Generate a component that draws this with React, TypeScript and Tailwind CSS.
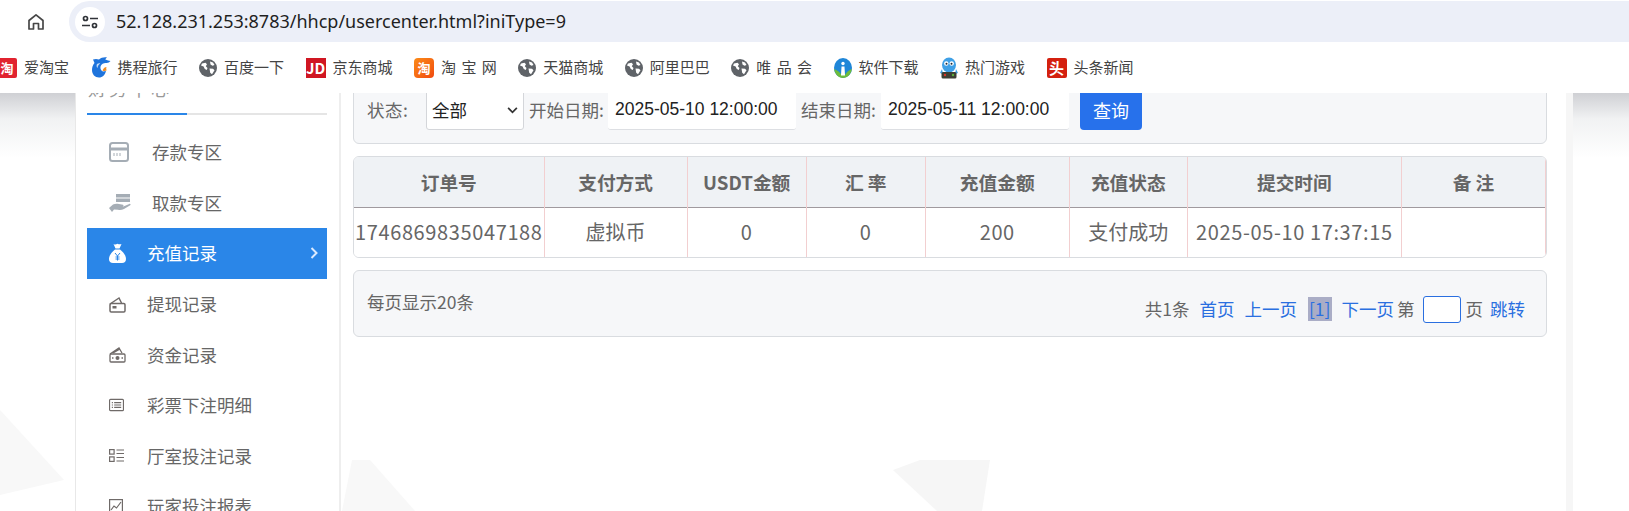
const CJK = "font-['Noto_Sans_CJK_SC','Liberation_Sans',sans-serif]";

const Globe = () => (
  <svg viewBox="0 0 18 18" className="w-[18px] h-[18px]">
    <circle cx="9" cy="9" r="9" fill="#5f6368" />
    <path d="M3 4.500l3.500-.8 1.500 1.600-1.200 2 1.700 1.600-.7 2.200-2-1.200-1.200-2.500L2 6.500zM11 2.500l3 1 1.500 2.500-2 .8-2-1.300zM10.500 9.500l3.500.3 1.500 1.500-2.500 4-1.800-1.500z" fill="#fff" />
  </svg>
);

const TextIcon = ({ bg, text, size = "text-[13px]" }: { bg: string; text: string; size?: string }) => (
  <div className={`w-[20px] h-[20px] rounded-[2px] flex items-center justify-center text-white font-bold leading-none ${bg} ${size}`}>{text}</div>
);

const Dolphin = () => (
  <svg viewBox="0 0 20 22" className="w-[20px] h-[22px]">
    <path d="M2 2.500c2-.8 4-.8 6 0C10 .8 13 0 16 .5c-1 .7-1.500 1.300-1.700 2 2 .7 3.700 1.500 5.200 1.500-1 1.300-2.300 1.900-3.800 2-2.500-.4-5 .5-6 3-.8 2.500.5 5 2.500 5.500l2.800-.5c-.8 3.800-3.500 6.500-7 6.500-4 0-7-3-7-7.500 0-2.700.8-5 2.500-7z" fill="#1f74dc" />
    <path d="M11.500 13.500c1-2.500 2.500-3.500 4-3.500-.5 1.500-.3 2.500.3 3.300-1.200.8-2.800 1-4.300.2z" fill="#f08c22" />
    <path d="M6 7c1.500-1 2.500-.8 3.300-.5-1.500.8-2.500 2.500-2.800 4.500C5.500 10 5.300 8.500 6 7z" fill="#fff" opacity="0.75" />
  </svg>
);

const SoftIcon = () => (
  <svg viewBox="0 0 18 20" className="w-[18px] h-[20px]">
    <ellipse cx="9" cy="10" rx="9" ry="10" fill="#1f86d8" />
    <path d="M0 11c1 5 4.500 9 9 9s8-4 9-9c-3 1-5.500 3-7 6l-1-6H8l-.5 6C6 14 3 12 0 11z" fill="#6ebc3c" />
    <circle cx="9" cy="5.500" r="1.700" fill="#fff" />
    <path d="M7.500 8.500h3l.5 9H7z" fill="#fff" />
  </svg>
);

const GameIcon = () => (
  <svg viewBox="0 0 18 22" className="w-[18px] h-[22px]">
    <ellipse cx="9" cy="8" rx="7" ry="7.500" fill="#3fa0e6" />
    <path d="M2 12l-2 4 3 1zM16 12l2 4-3 1z" fill="#3fa0e6" />
    <circle cx="6.300" cy="6.500" r="2.200" fill="#fff" />
    <circle cx="11.700" cy="6.500" r="2.200" fill="#fff" />
    <circle cx="6.500" cy="6.800" r="1" fill="#1d2b3a" />
    <circle cx="11.500" cy="6.800" r="1" fill="#1d2b3a" />
    <rect x="1.500" y="15" width="15" height="6.500" rx="1.500" fill="#3c3f35" />
    <circle cx="5" cy="18" r="1.200" fill="#d8362a" />
    <circle cx="13" cy="18" r="1.200" fill="#5cae3c" />
  </svg>
);

const bookmarks = [
  { name: "爱淘宝", icon: <TextIcon bg="bg-[#e1232f]" text="淘" /> },
  { name: "携程旅行", icon: <Dolphin /> },
  { name: "百度一下", icon: <Globe /> },
  { name: "京东商城", icon: <TextIcon bg="bg-[#d01622] rounded-none" text="JD" size="text-[15px]" /> },
  { name: "淘 宝 网", icon: <TextIcon bg="bg-gradient-to-br from-[#fb8a18] to-[#f0480f] rounded-[4px]" text="淘" /> },
  { name: "天猫商城", icon: <Globe /> },
  { name: "阿里巴巴", icon: <Globe /> },
  { name: "唯 品 会", icon: <Globe /> },
  { name: "软件下载", icon: <SoftIcon /> },
  { name: "热门游戏", icon: <GameIcon /> },
  { name: "头条新闻", icon: <TextIcon bg="bg-[#d4200f]" text="头" size="text-[15px]" /> },
];

const DepositIcon = () => (
  <svg viewBox="0 0 20 20" className="w-[20px] h-[20px]" fill="none" stroke="#a5adb5" strokeWidth="2">
    <rect x="1" y="1" width="18" height="18" rx="2.500" />
    <path d="M1 7h18" strokeWidth="3" />
    <path d="M5 11v3M8 11v3M11 11v3" strokeWidth="1" />
  </svg>
);

const WithdrawIcon = () => (
  <svg viewBox="0 0 22 18" className="w-[22px] h-[18px]">
    <rect x="7" y="0" width="14" height="3.500" fill="#a5adb5" />
    <rect x="7" y="4.500" width="14" height="3.500" fill="#a5adb5" />
    <path d="M0 14l4-3.500c2-1 4-1 6-.5l4 .8c1 .5.500 1.700-.7 1.600l-3-.2 4 .2 6-2.500c1.200-.3 1.700.7.900 1.400L15 15c-2 1-4 1.200-6 .8l-4-.3-2 2.500z" fill="#a5adb5" />
  </svg>
);

const BagIcon = () => (
  <svg viewBox="0 0 17 20" className="w-[17px] h-[20px]">
    <path d="M4.500 1c2 1 2.500.3 4-.3 1.500.6 2 .9 4 .3l-2 4.500h-4z" fill="#fff" />
    <path d="M6 6.500h5c3.500 2.500 6 6.500 6 9.500 0 2.500-1.500 4-4 4H4c-2.500 0-4-1.500-4-4 0-3 2.500-7 6-9.500z" fill="#fff" />
    <path d="M6 10l2.500 3L11 10M8.500 13v4.500M6.500 14h4M6.500 16h4" stroke="#2a86e8" strokeWidth="1" fill="none" />
  </svg>
);

const WalletIcon = () => (
  <svg viewBox="0 0 17 17" className="w-[17px] h-[17px]" fill="none" stroke="#6f6a68" strokeWidth="1.500">
    <path d="M1 8l9-6 2.500 5" />
    <rect x="1" y="7.500" width="15" height="8.500" rx="1.200" />
    <rect x="3.500" y="10" width="4" height="2.500" fill="#6f6a68" stroke="none" />
  </svg>
);

const CashIcon = () => (
  <svg viewBox="0 0 17 17" className="w-[17px] h-[17px]" fill="none" stroke="#6f6a68" strokeWidth="1.300">
    <path d="M1 8l9-6 3 5M4 7l7-4" />
    <rect x="1" y="8" width="15" height="8" rx="1" />
    <circle cx="8.500" cy="12" r="2" fill="#6f6a68" stroke="none" />
    <path d="M3 12h1.500M12.500 12H14" />
  </svg>
);

const ListCardIcon = () => (
  <svg viewBox="0 0 16 14" className="w-[15px] h-[14px]" fill="none" stroke="#6f6a68" strokeWidth="1.200">
    <rect x="0.600" y="1" width="14.800" height="12" rx="1" />
    <path d="M3 4.500h1.200M3 7h1.200M3 9.500h1.200M5.500 4.500H13M5.500 7H13M5.500 9.500H13" />
  </svg>
);

const GridListIcon = () => (
  <svg viewBox="0 0 15 13" className="w-[15px] h-[13px]" fill="none" stroke="#6f6a68" strokeWidth="1.200">
    <rect x="0.600" y="0.600" width="4.500" height="4.500" />
    <rect x="0.600" y="7.900" width="4.500" height="4.500" />
    <path d="M7.500 1h7.500M7.500 4.500h7.500M7.500 8.500h7.500M7.500 12h7.500" />
  </svg>
);

const ChartIcon = () => (
  <svg viewBox="0 0 14 14" className="w-[14px] h-[14px]" fill="none" stroke="#6f6a68" strokeWidth="1.200">
    <rect x="0.600" y="0.600" width="12.800" height="12.800" />
    <path d="M2 11l3-4 2.500 2L12 3" />
  </svg>
);

const menu = [
  { name: "存款专区", icon: <DepositIcon />, wide: true },
  { name: "取款专区", icon: <WithdrawIcon />, wide: true },
  { name: "充值记录", icon: <BagIcon />, active: true },
  { name: "提现记录", icon: <WalletIcon /> },
  { name: "资金记录", icon: <CashIcon /> },
  { name: "彩票下注明细", icon: <ListCardIcon /> },
  { name: "厅室投注记录", icon: <GridListIcon /> },
  { name: "玩家投注报表", icon: <ChartIcon /> },
];

const columns = [
  { title: "订单号", w: "w-[190px]" },
  { title: "支付方式", w: "w-[143px]" },
  { title: "USDT金额", w: "w-[119px]" },
  { title: "汇 率", w: "w-[119px]" },
  { title: "充值金额", w: "w-[144px]" },
  { title: "充值状态", w: "w-[118px]" },
  { title: "提交时间", w: "w-[214px]" },
  { title: "备 注", w: "w-[144px]" },
];

const row = [
  { text: "1746869835047188", num: true },
  { text: "虚拟币" },
  { text: "0", num: true },
  { text: "0", num: true },
  { text: "200", num: true },
  { text: "支付成功" },
  { text: "2025-05-10 17:37:15", num: true },
  { text: "" },
];

export default function App() {
  return (
    <div className={`w-[1629px] h-[511px] overflow-hidden bg-white flex flex-col text-[#666] ${CJK}`}>
      {/* 브라우저 상단 */}
      <div className="h-[42px] flex items-center pt-px bg-white">
        <svg viewBox="0 0 18 18" className="w-[18px] h-[18px] ml-[27px]" fill="none" stroke="#474747" strokeWidth="1.700" strokeLinejoin="round">
          <path d="M2 7.500L9 1.800l7 5.700V16h-4.500v-5.500h-5V16H2z" />
        </svg>
        <div className="ml-[24px] flex-1 h-[41px] bg-[#eceff8] rounded-l-[21px] flex items-center pl-[6px]">
          <div className="w-[30px] h-[30px] rounded-full bg-white flex items-center justify-center">
            <svg viewBox="0 0 16 14" className="w-[16px] h-[14px]" fill="none" stroke="#303338" strokeWidth="1.700">
              <circle cx="3.500" cy="3.500" r="2" />
              <path d="M8 3.500h8M0 10.500h8" />
              <circle cx="12.500" cy="10.500" r="2" />
            </svg>
          </div>
          <span className="ml-[11px] text-[18px] text-[#1f1f1f] font-['Noto_Sans',sans-serif]">52.128.231.253:8783/hhcp/usercenter.html?iniType=9</span>
        </div>
      </div>
      <div className="h-[51px] flex items-center gap-[21.5px] -ml-[3px] text-[15px] text-[#444] bg-white [word-spacing:2px]">
        {bookmarks.map((b) => (
          <div key={b.name} className="flex items-center gap-[7px] shrink-0">
            {b.icon}
            <span>{b.name}</span>
          </div>
        ))}
      </div>

      {/* 페이지 */}
      <div className="relative flex-1 flex overflow-hidden">
        <div className="w-[75px] shrink-0">
          <div className="h-[65px] bg-gradient-to-b from-[#cfd0d4] via-[#f1f2f3] via-40% to-white" />
        </div>
        <div className="relative flex-1 min-w-0 flex bg-white border-l border-[#e8e8e8]">
          <aside className="w-[265px] shrink-0 border-r-2 border-[#eeeeee] pl-[11px] pr-[12px]">
            <div className="h-[22px] border-b-2 border-[#e5e5e5] relative">
              <div className="absolute left-0 right-[140px] -bottom-[2px] h-[2px] bg-[#2a86e8]" />
              <div className="absolute left-[1px] -top-[15px] text-[18px] leading-[20px] tracking-[3px] text-[#999]">财务中心</div>
            </div>
            <div className="mt-[12px]">
              {menu.map((m) => (
                <div
                  key={m.name}
                  className={`h-[50.6px] flex items-center relative text-[17.5px] ${m.active ? "bg-[#2a86e8] text-white" : ""}`}
                >
                  <div className={`shrink-0 flex justify-start ${m.wide ? "ml-[22px] w-[43px]" : "ml-[22px] w-[38px]"}`}>{m.icon}</div>
                  <span>{m.name}</span>
                  {m.active && (
                    <svg viewBox="0 0 8 12" className="absolute right-[9px] top-[19px] w-[8px] h-[12px]" fill="none" stroke="#dbeafe" strokeWidth="2">
                      <path d="M1.500 1l5 5-5 5" />
                    </svg>
                  )}
                </div>
              ))}
            </div>
          </aside>

          <main className="flex-1 min-w-0 pl-[12px] pr-[19px] text-[17.5px]">
            <div className="-mt-[20px] h-[71px] bg-[#f6f7f9] border border-[#d9dce0] rounded-[6px] flex items-end pl-[13px] pb-[13px]">
              <span className="w-[59px] leading-[40px] tracking-[0.5px]">状态:</span>
              <div className="relative w-[98px] h-[40px]">
                <select className="appearance-none w-full h-full bg-white border border-[#d4d6da] rounded-[3px] pl-[5px] text-[#222] text-[17.5px] outline-none">
                  <option>全部</option>
                </select>
                <svg viewBox="0 0 12 8" className="absolute right-[6px] top-[17px] w-[11px] h-[7px] pointer-events-none" fill="none" stroke="#333" strokeWidth="2">
                  <path d="M1 1l5 5 5-5" />
                </svg>
              </div>
              <span className="ml-[5px] w-[79px] leading-[40px]">开始日期:</span>
              <input readOnly value="2025-05-10 12:00:00" className="w-[188px] h-[40px] bg-white border-b border-[#dddfe3] rounded-[3px] pl-[7px] text-[#222] font-['Liberation_Sans',sans-serif] outline-none" />
              <span className="ml-[5px] w-[80px] leading-[40px]">结束日期:</span>
              <input readOnly value="2025-05-11 12:00:00" className="w-[188px] h-[40px] bg-white border-b border-[#dddfe3] rounded-[3px] pl-[7px] text-[#222] font-['Liberation_Sans',sans-serif] outline-none" />
              <button className="ml-[11px] w-[62px] h-[40px] bg-[#2771eb] text-white text-[18px] rounded-[4px]">查询</button>
            </div>

            <div className="mt-[12px] border border-[#d9dce0] rounded-[6px] overflow-hidden">
              <table className="w-full table-fixed border-collapse">
                <thead>
                  <tr className="h-[50px] bg-[#eff2f5] border-b border-[#a09a9e]">
                    {columns.map((c) => (
                      <th key={c.title} className={`${c.w} border-r border-[#f2cfd0] text-[18.7px] font-bold text-center`}>{c.title}</th>
                    ))}
                  </tr>
                </thead>
                <tbody>
                  <tr className="h-[50px] bg-white">
                    {row.map((cell, i) => (
                      <td key={i} className={`border-r border-[#f2cfd0] text-[20px] text-center whitespace-nowrap p-0 ${cell.num ? "tracking-[0.62px]" : ""}`}>{cell.text}</td>
                    ))}
                  </tr>
                </tbody>
              </table>
            </div>

            <div className="mt-[12px] h-[67px] bg-[#f6f7f9] border border-[#d9dce0] rounded-[6px] flex justify-between pl-[13px] pr-[21px]">
              <span className="mt-[17px] leading-[28px]">每页显示20条</span>
              <div className="mt-[24px] h-[28px] flex items-center">
                <span>共1条</span>
                <a className="ml-[10px] text-[#2a6fe0]">首页</a>
                <a className="ml-[10px] text-[#2a6fe0]">上一页</a>
                <a className="ml-[11px] px-[1px] bg-[#aaadc6] text-[#2a6fe0] leading-[24px]">[1]</a>
                <a className="ml-[10px] text-[#2a6fe0]">下一页</a>
                <span className="ml-[3px]">第</span>
                <input readOnly className="ml-[8px] w-[38px] h-[27px] bg-white border border-[#2a6fe0] rounded-[3px] outline-none" />
                <span className="ml-[5px]">页</span>
                <a className="ml-[7px] text-[#2a6fe0]">跳转</a>
              </div>
            </div>
          </main>
          <div className="w-[7px] shrink-0 bg-[#f6f6f6]" />
        </div>
        <div className="w-[56px] shrink-0">
          <div className="h-[65px] bg-gradient-to-b from-[#cfd0d4] via-[#f1f2f3] via-40% to-white" />
        </div>

        {/* 배경 무늬 */}
        <svg viewBox="0 0 1629 418" className="absolute inset-0 w-[1629px] h-[418px] pointer-events-none">
          <path d="M0 317L64 387 0 402z" fill="#f8f8f8" />
          <path d="M342 418L352 367h18L415 418z" fill="#f8f8f8" />
          <path d="M893 377L920 367H990L982 418H937z" fill="#f6f6f6" />
        </svg>
      </div>
    </div>
  );
}
